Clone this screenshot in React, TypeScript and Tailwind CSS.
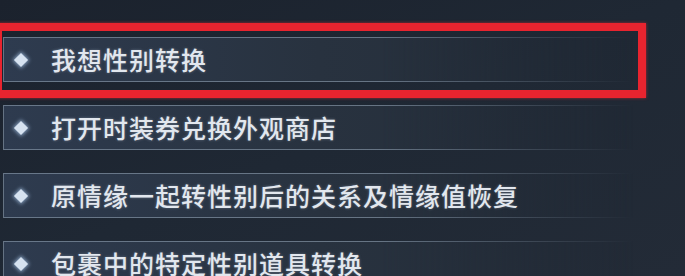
const items = [
  "我想性别转换",
  "打开时装券兑换外观商店",
  "原情缘一起转性别后的关系及情缘值恢复",
  "包裹中的特定性别道具转换",
];

const Diamond = () => (
  <span className="flex h-[16px] w-[16px] shrink-0 items-center justify-center">
    <span className="h-[10px] w-[10px] rotate-45 bg-[#d6e2f0] shadow-[0_0_4px_1px_rgba(170,200,235,0.7)]" />
  </span>
);

export default function App() {
  return (
    <div className="relative h-[276px] w-[685px] overflow-hidden bg-gradient-to-br from-[#1b222d] via-[#1f2834] to-[#232b37] [font-family:'Noto_Sans_CJK_SC','Noto_Sans',sans-serif]">
      <div className="flex flex-col gap-[23px] pl-[3px] pt-[37px]">
        {items.map((text, index) => (
          <div key={index} className="relative h-[45px] w-[630px]">
            {/* faded box behind each option */}
            <div className="absolute inset-0 border-y border-l border-[#8291a3]/70 bg-gradient-to-r from-[#2e3b4f] via-[#28323f] to-[#242d39] [mask-image:linear-gradient(to_right,black_60%,transparent)]" />
            <div className="relative flex h-full items-center gap-[22px] pl-[10px]">
              <Diamond />
              <span className="text-[25px] font-medium leading-none tracking-[1px] text-[#e2e7ee] [text-shadow:0_0_3px_rgba(200,215,235,0.35)]">
                {text}
              </span>
            </div>
          </div>
        ))}
      </div>

      {/* red highlight around the first option */}
      <div className="pointer-events-none absolute left-[-6px] top-[23px] h-[75px] w-[652px] border-[8px] border-[#e8242f] shadow-[0_0_3px_rgba(255,40,50,0.6)]" />
    </div>
  );
}
